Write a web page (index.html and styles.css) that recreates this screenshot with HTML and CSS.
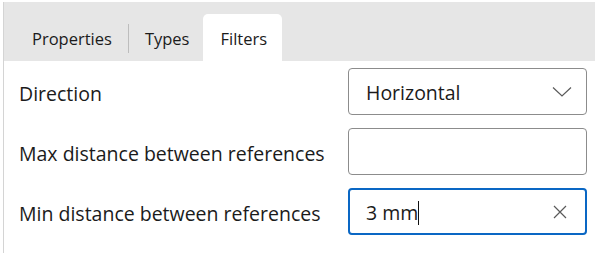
FILE: index.html
```html
<!DOCTYPE html>
<html>
<head>
  <title>Filters</title>
  <link rel="stylesheet" href="styles.css">
</head>
<body>
  <div class="panel">
    <div class="tabs">
      <div class="tab">Properties</div>
      <div class="tab-sep"></div>
      <div class="tab">Types</div>
      <div class="tab active">Filters</div>
    </div>

    <div class="content">
      <div class="row">
        <label>Direction</label>
        <div class="field select">
          <span class="value">Horizontal</span>
          <svg class="icon" width="20" height="12" viewBox="0 0 20 12">
            <path d="M1 1.5 L10 10 L19 1.5" fill="none" stroke="#5a5a5a" stroke-width="1.2"/>
          </svg>
        </div>
      </div>

      <div class="row">
        <label>Max distance between references</label>
        <div class="field"></div>
      </div>

      <div class="row">
        <label>Min distance between references</label>
        <div class="field focused">
          <span class="value">3 mm</span><span class="caret"></span>
          <svg class="icon clear" width="14" height="14" viewBox="0 0 14 14">
            <path d="M1 1 L13 13 M13 1 L1 13" fill="none" stroke="#5a5a5a" stroke-width="1.2"/>
          </svg>
        </div>
      </div>
    </div>
  </div>
</body>
</html>
```

FILE: styles.css
```css
body {
  margin: 0;
  background: #fff;
  font-family: "Open Sans", "Noto Sans", sans-serif;
  color: #1b1b1b;
}
.panel {
  margin: 2px 6px 0 3px;
  border-left: 1px solid #d4d4d4;
  height: 251px;
}
.tabs {
  display: flex;
  align-items: flex-end;
  height: 59px;
  background: #e6e6e6;
  padding-left: 12px;
}
.tab {
  font-size: 16.5px;
  padding: 0 16px;
  height: 47px;
  line-height: 50px;
}
.tab-sep {
  width: 1px;
  height: 29px;
  background: #bdbdbd;
  margin-bottom: 8px;
}
.tab.active {
  background: #fff;
  border-radius: 5px 5px 0 0;
  margin-left: -2px;
  padding: 0 15px 0 17px;
}
.content {
  padding: 7px 8px 0 15px;
}
.row {
  display: flex;
  align-items: center;
  justify-content: space-between;
  margin-bottom: 13px;
}
label {
  font-size: 19.5px;
  padding-top: 3px;
}
.field {
  display: flex;
  align-items: center;
  box-sizing: border-box;
  width: 239px;
  height: 47px;
  padding: 0 14px 0 17px;
  border: 1px solid #8c8c8c;
  border-radius: 4px;
  font-size: 19.5px;
}
.field.focused {
  border: 2px solid #0a67c4;
  padding-left: 16px;
}
.value {
  color: #1b1b1b;
  padding-top: 2px;
}
.caret {
  width: 1px;
  height: 24px;
  background: #111;
  margin-top: 2px;
}
.icon {
  margin-left: auto;
}
.clear {
  margin-right: 4px;
}
```
